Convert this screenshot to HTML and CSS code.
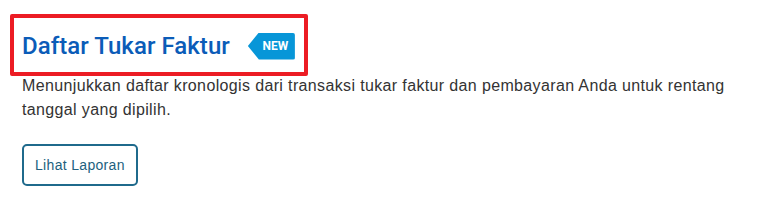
FILE: index.html
```html
<!DOCTYPE html>
<html lang="id">
<head>
<meta charset="utf-8">
<title>Daftar Tukar Faktur</title>
<link rel="stylesheet" href="styles.css">
</head>
<body>
<div class="card">
  <div class="heading-box">
    <h2 class="title">Daftar Tukar Faktur</h2>
    <span class="badge">NEW</span>
  </div>
  <div class="content">
    <p class="desc">Menunjukkan daftar kronologis dari transaksi tukar faktur dan pembayaran Anda untuk rentang tanggal yang dipilih.</p>
    <button class="btn" type="button">Lihat Laporan</button>
  </div>
</div>
</body>
</html>
```
FILE: styles.css
```css
html, body {
  margin: 0;
  padding: 0;
  background: #ffffff;
}
.card {
  padding: 14px 20px 0 10px;
}
.heading-box {
  display: inline-flex;
  align-items: center;
  gap: 18px;
  height: 62px;
  box-sizing: border-box;
  border: 4px solid #ec1c24;
  border-radius: 2px;
  padding: 2px 9px 0 8px;
}
.title {
  margin: 0;
  font-family: Roboto, "Liberation Sans", sans-serif;
  font-weight: 500;
  font-size: 24px;
  line-height: 28px;
  letter-spacing: 0.05px;
  color: #0b5cb8;
}
.badge {
  display: inline-flex;
  align-items: center;
  justify-content: center;
  height: 27px;
  width: 47px;
  padding-left: 8px;
  box-sizing: border-box;
  background: #0796d8;
  color: #ffffff;
  font-family: Roboto, "Liberation Sans", sans-serif;
  font-weight: 700;
  font-size: 12px;
  clip-path: polygon(11px 0, 100% 0, 100% 100%, 11px 100%, 0 50%);
  border-radius: 0 2px 2px 0;
}
.content {
  padding-left: 12px;
}
.desc {
  margin: -2px 0 22px;
  font-family: "Liberation Sans", Arial, sans-serif;
  font-size: 16px;
  line-height: 24px;
  letter-spacing: 0.36px;
  color: #333333;
}
.btn {
  display: block;
  margin: 0;
  height: 42px;
  box-sizing: border-box;
  padding: 0 11px;
  border: 2px solid #1f6a8c;
  border-radius: 5px;
  background: #ffffff;
  color: #225f7e;
  font-family: "Liberation Sans", Arial, sans-serif;
  font-size: 14px;
  line-height: 18px;
  letter-spacing: 0.32px;
}
```
